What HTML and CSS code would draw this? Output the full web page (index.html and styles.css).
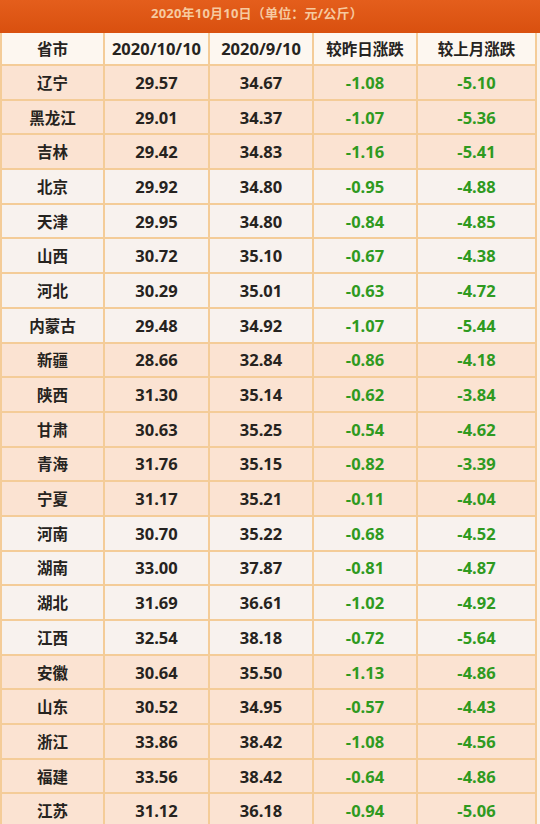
FILE: index.html
```html
<!DOCTYPE html>
<html lang="zh">
<head>
<meta charset="utf-8">
<link rel="stylesheet" href="styles.css">
</head>
<body>
<div class="banner"><span class="title">2020年10月10日（单位：元/公斤）</span></div>
<div class="table">
  <div class="row head"><div>省市</div><div class="n">2020/10/10</div><div class="n">2020/9/10</div><div>较昨日涨跌</div><div>较上月涨跌</div></div>
  <div class="row a"><div>辽宁</div><div class="n">29.57</div><div class="n">34.67</div><div class="n g">-1.08</div><div class="n g">-5.10</div></div>
  <div class="row a"><div>黑龙江</div><div class="n">29.01</div><div class="n">34.37</div><div class="n g">-1.07</div><div class="n g">-5.36</div></div>
  <div class="row a"><div>吉林</div><div class="n">29.42</div><div class="n">34.83</div><div class="n g">-1.16</div><div class="n g">-5.41</div></div>
  <div class="row b"><div>北京</div><div class="n">29.92</div><div class="n">34.80</div><div class="n g">-0.95</div><div class="n g">-4.88</div></div>
  <div class="row b"><div>天津</div><div class="n">29.95</div><div class="n">34.80</div><div class="n g">-0.84</div><div class="n g">-4.85</div></div>
  <div class="row b"><div>山西</div><div class="n">30.72</div><div class="n">35.10</div><div class="n g">-0.67</div><div class="n g">-4.38</div></div>
  <div class="row b"><div>河北</div><div class="n">30.29</div><div class="n">35.01</div><div class="n g">-0.63</div><div class="n g">-4.72</div></div>
  <div class="row b"><div>内蒙古</div><div class="n">29.48</div><div class="n">34.92</div><div class="n g">-1.07</div><div class="n g">-5.44</div></div>
  <div class="row a"><div>新疆</div><div class="n">28.66</div><div class="n">32.84</div><div class="n g">-0.86</div><div class="n g">-4.18</div></div>
  <div class="row a"><div>陕西</div><div class="n">31.30</div><div class="n">35.14</div><div class="n g">-0.62</div><div class="n g">-3.84</div></div>
  <div class="row a"><div>甘肃</div><div class="n">30.63</div><div class="n">35.25</div><div class="n g">-0.54</div><div class="n g">-4.62</div></div>
  <div class="row a"><div>青海</div><div class="n">31.76</div><div class="n">35.15</div><div class="n g">-0.82</div><div class="n g">-3.39</div></div>
  <div class="row a"><div>宁夏</div><div class="n">31.17</div><div class="n">35.21</div><div class="n g">-0.11</div><div class="n g">-4.04</div></div>
  <div class="row b"><div>河南</div><div class="n">30.70</div><div class="n">35.22</div><div class="n g">-0.68</div><div class="n g">-4.52</div></div>
  <div class="row b"><div>湖南</div><div class="n">33.00</div><div class="n">37.87</div><div class="n g">-0.81</div><div class="n g">-4.87</div></div>
  <div class="row b"><div>湖北</div><div class="n">31.69</div><div class="n">36.61</div><div class="n g">-1.02</div><div class="n g">-4.92</div></div>
  <div class="row b"><div>江西</div><div class="n">32.54</div><div class="n">38.18</div><div class="n g">-0.72</div><div class="n g">-5.64</div></div>
  <div class="row a"><div>安徽</div><div class="n">30.64</div><div class="n">35.50</div><div class="n g">-1.13</div><div class="n g">-4.86</div></div>
  <div class="row a"><div>山东</div><div class="n">30.52</div><div class="n">34.95</div><div class="n g">-0.57</div><div class="n g">-4.43</div></div>
  <div class="row a"><div>浙江</div><div class="n">33.86</div><div class="n">38.42</div><div class="n g">-1.08</div><div class="n g">-4.56</div></div>
  <div class="row a"><div>福建</div><div class="n">33.56</div><div class="n">38.42</div><div class="n g">-0.64</div><div class="n g">-4.86</div></div>
  <div class="row a"><div>江苏</div><div class="n">31.12</div><div class="n">36.18</div><div class="n g">-0.94</div><div class="n g">-5.06</div></div>
</div>
</body>
</html>
```
FILE: styles.css
```css
html, body {
  margin: 0;
  padding: 0;
  background: #fbf3ec;
}
body {
  width: 540px;
  height: 824px;
  overflow: hidden;
  font-family: "Open Sans", "Noto Sans CJK SC", sans-serif;
}
.banner {
  height: 33px;
  background: linear-gradient(#e45e1c, #d9500f);
  display: flex;
  align-items: center;
  justify-content: center;
  box-sizing: border-box;
  padding-bottom: 8px;
  padding-right: 26px;
}
.title {
  color: #f6caa0;
  font-size: 13px;
  font-weight: bold;
  letter-spacing: 0.2px;
}
.table {
  width: 537px;
  border-left: 2px solid #f4cc98;
  box-sizing: border-box;
}
.row {
  display: grid;
  grid-template-columns: 103px 105px 104px 104px 119px;
  height: 34.7px;
  border-bottom: 2px solid #f4cc98;
  box-sizing: border-box;
}
.row > div {
  border-right: 2px solid #f4cc98;
  display: flex;
  align-items: center;
  justify-content: center;
  font-size: 15.5px;
  font-weight: bold;
  color: #262320;
}
.row > div.n {
  font-size: 16.5px;
}
.row.head {
  height: 33px;
  background: #fdf7f0;
}
.row.a { background: #fbe3d2; }
.row.b { background: #f8f2ee; }
.row > div.g { color: #2f9a1f; }
```
